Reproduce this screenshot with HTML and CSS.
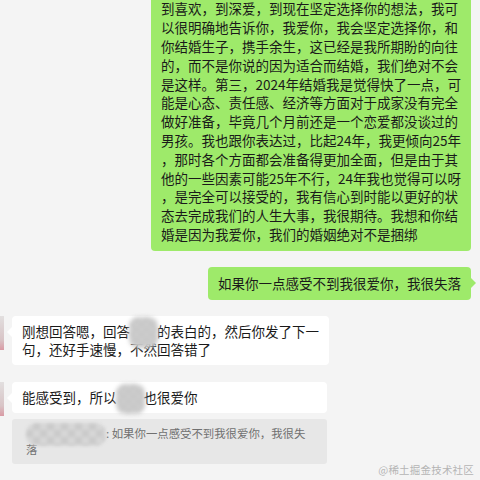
FILE: index.html
```html
<!DOCTYPE html>
<html lang="zh-CN">
<head>
  <meta charset="UTF-8">
  <meta name="viewport" content="width=device-width, initial-scale=1.0">
  <title>聊天记录</title>
  <link rel="stylesheet" href="styles.css">
</head>
<body>
<div class="chat">
  <div class="row row-self">
    <div class="bubble bubble-self">到喜欢，到深爱，到现在坚定选择你的想法，我可<br>以很明确地告诉你，我爱你，我会坚定选择你，和<br>你结婚生子，携手余生，这已经是我所期盼的向往<br>的，而不是你说的因为适合而结婚，我们绝对不会<br>是这样。第三，2024年结婚我是觉得快了一点，可<br>能是心态、责任感、经济等方面对于成家没有完全<br>做好准备，毕竟几个月前还是一个恋爱都没谈过的<br>男孩。我也跟你表达过，比起24年，我更倾向25年<br>，那时各个方面都会准备得更加全面，但是由于其<br>他的一些因素可能25年不行，24年我也觉得可以呀<br>，是完全可以接受的，我有信心到时能以更好的状<br>态去完成我们的人生大事，我很期待。我想和你结<br>婚是因为我爱你，我们的婚姻绝对不是捆绑</div>
  </div>

  <div class="row row-self">
    <div class="bubble bubble-self tail">如果你一点感受不到我很爱你，我很失落</div>
  </div>

  <div class="row row-peer row-first">
    <div class="avatar"></div>
    <div class="bubble bubble-peer tail">刚想回答嗯，回答<span class="mask"></span>的表白的，然后你发了下一<br>句，还好手速慢，不然回答错了</div>
  </div>

  <div class="row row-peer">
    <div class="avatar"></div>
    <div class="msg-col">
      <div class="bubble bubble-peer tail">能感受到，所以<span class="mask"></span>也很爱你</div>
      <div class="quote"><span class="mask mask-name"></span>: 如果你一点感受不到我很爱你，我很失<br>落</div>
    </div>
  </div>
</div>

<div class="watermark">@稀土掘金技术社区</div>
</body>
</html>
```

FILE: styles.css
```css
html, body {
  margin: 0;
  height: 100%;
}
body {
  font-family: "Noto Sans CJK SC", "Noto Sans", sans-serif;
  background-color: #f4f4f4;
  color: #1a1a1a;
  overflow: hidden;
  position: relative;
}
.chat {
  height: 100vh;
  box-sizing: border-box;
  display: flex;
  flex-direction: column;
  justify-content: flex-end;
  padding: 0 9px 16px 0;
  overflow: hidden;
}
.row {
  display: flex;
  flex-shrink: 0;
  margin-top: 16px;
}
.row-self {
  justify-content: flex-end;
}
.row-peer {
  gap: 8px;
  margin-top: 17px;
}
.row-first {
  margin-top: 16px;
}
.avatar {
  width: 4px;
  height: 34px;
  flex-shrink: 0;
  background: linear-gradient(#e2dfdf, #d8c4c6 70%, #d99aa4);
}
.msg-col {
  display: flex;
  flex-direction: column;
  gap: 6px;
}
.bubble {
  position: relative;
  font-size: 13.5px;
  line-height: 18.8px;
  padding: 7px 10px;
  border-radius: 4px;
  white-space: nowrap;
}
.bubble-self {
  background-color: #9eea6a;
}
.bubble-peer {
  background-color: #ffffff;
  padding: 6px 10px;
}
.tail::before {
  content: "";
  position: absolute;
  top: 11px;
  border-top: 5px solid transparent;
  border-bottom: 5px solid transparent;
}
.bubble-self.tail::before {
  right: -5px;
  border-left: 5px solid #9eea6a;
}
.bubble-peer.tail::before {
  left: -5px;
  border-right: 5px solid #ffffff;
}
.mask {
  display: inline-block;
  position: relative;
  width: 2em;
  height: 1em;
  vertical-align: middle;
}
.mask::after {
  content: "";
  position: absolute;
  left: -1px;
  right: -1px;
  top: -9px;
  bottom: -8px;
  border-radius: 9px;
  background: repeating-conic-gradient(#c6c6c6 0 25%, #cecece 0 50%) 0 0 / 10px 10px;
  filter: blur(2px);
}
.quote {
  width: 315px;
  box-sizing: border-box;
  background-color: #e7e7e7;
  border-radius: 3px;
  padding: 6px 14px 7px;
  font-size: 11.4px;
  line-height: 16px;
  color: #707070;
  white-space: nowrap;
}
.mask-name {
  width: 80px;
  height: 12px;
}
.mask-name::after {
  left: 0;
  right: 0;
  top: -6px;
  bottom: -5px;
  border-radius: 10px;
  background: repeating-conic-gradient(#cbcbcb 0 25%, #d6d6d6 0 50%) 0 0 / 14px 14px;
  filter: blur(1.5px);
}
.watermark {
  position: absolute;
  right: 6px;
  bottom: 3px;
  font-size: 10.5px;
  color: #b4b4b4;
  letter-spacing: 0.2px;
}
```
